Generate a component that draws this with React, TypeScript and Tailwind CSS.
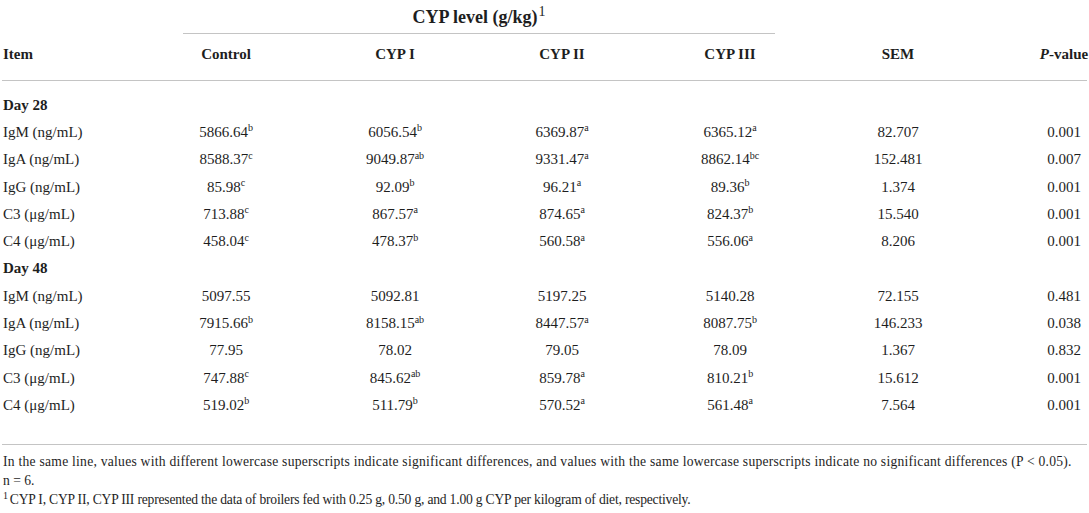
import React from "react";

type Cell = [string, string?];
type Row = { label: string; cells: Cell[]; sem: string; p: string };

const day28: Row[] = [
  { label: "IgM (ng/mL)", cells: [["5866.64", "b"], ["6056.54", "b"], ["6369.87", "a"], ["6365.12", "a"]], sem: "82.707", p: "0.001" },
  { label: "IgA (ng/mL)", cells: [["8588.37", "c"], ["9049.87", "ab"], ["9331.47", "a"], ["8862.14", "bc"]], sem: "152.481", p: "0.007" },
  { label: "IgG (ng/mL)", cells: [["85.98", "c"], ["92.09", "b"], ["96.21", "a"], ["89.36", "b"]], sem: "1.374", p: "0.001" },
  { label: "C3 (\u03bcg/mL)", cells: [["713.88", "c"], ["867.57", "a"], ["874.65", "a"], ["824.37", "b"]], sem: "15.540", p: "0.001" },
  { label: "C4 (\u03bcg/mL)", cells: [["458.04", "c"], ["478.37", "b"], ["560.58", "a"], ["556.06", "a"]], sem: "8.206", p: "0.001" },
];

const day48: Row[] = [
  { label: "IgM (ng/mL)", cells: [["5097.55"], ["5092.81"], ["5197.25"], ["5140.28"]], sem: "72.155", p: "0.481" },
  { label: "IgA (ng/mL)", cells: [["7915.66", "b"], ["8158.15", "ab"], ["8447.57", "a"], ["8087.75", "b"]], sem: "146.233", p: "0.038" },
  { label: "IgG (ng/mL)", cells: [["77.95"], ["78.02"], ["79.05"], ["78.09"]], sem: "1.367", p: "0.832" },
  { label: "C3 (\u03bcg/mL)", cells: [["747.88", "c"], ["845.62", "ab"], ["859.78", "a"], ["810.21", "b"]], sem: "15.612", p: "0.001" },
  { label: "C4 (\u03bcg/mL)", cells: [["519.02", "b"], ["511.79", "b"], ["570.52", "a"], ["561.48", "a"]], sem: "7.564", p: "0.001" },
];

const gridCols = "grid grid-cols-[142px_168px_170px_164px_172px_164px_109px]";

function DataRow({ r }: { r: Row }) {
  return (
    <div className={`${gridCols} h-[27.3px] items-center`}>
      <div className="pl-[3px] whitespace-nowrap">{r.label}</div>
      {r.cells.map((c, i) => (
        <div key={i} className="text-center whitespace-nowrap">
          {c[0]}
          {c[1] ? <sup className="text-[10px] top-[-0.55em]">{c[1]}</sup> : null}
        </div>
      ))}
      <div className="text-center">{r.sem}</div>
      <div className="text-center pl-[59px]">{r.p}</div>
    </div>
  );
}

function GroupRow({ label }: { label: string }) {
  return (
    <div className={`${gridCols} h-[27.3px] items-center`}>
      <div className="pl-[3px] font-bold whitespace-nowrap">{label}</div>
    </div>
  );
}

export default function App() {
  return (
    <div className="w-[1089px] h-[513px] bg-white text-[#1e1e1e] font-['Liberation_Serif',serif] text-[15px] leading-[20px] overflow-hidden">
      {/* top spanning header */}
      <div className={`${gridCols}`}>
        <div />
        <div className="col-span-4 mx-[41px] h-[34px] border-b border-[#c4c4c4] flex items-center justify-center">
          <span className="font-bold text-[18px] whitespace-nowrap">
            CYP level (g/kg)<sup className="font-normal text-[14px] top-[-0.45em] ml-[1px]">1</sup>
          </span>
        </div>
      </div>
      {/* column header */}
      <div className="mx-[2px] border-b border-[#c4c4c4] h-[47px] pt-[10px]">
        <div className={`${gridCols} -ml-[2px] font-bold`}>
          <div className="pl-[3px]">Item</div>
          <div className="text-center">Control</div>
          <div className="text-center">CYP I</div>
          <div className="text-center">CYP II</div>
          <div className="text-center">CYP III</div>
          <div className="text-center">SEM</div>
          <div className="text-center pl-[59px] whitespace-nowrap">
            <span className="italic">P</span>-value
          </div>
        </div>
      </div>
      {/* body */}
      <div className="mx-[2px] border-b border-[#c4c4c4] pt-[10px] pb-[25px]">
        <div className="-ml-[2px]">
          <GroupRow label="Day 28" />
          {day28.map((r, i) => (
            <DataRow key={i} r={r} />
          ))}
          <GroupRow label="Day 48" />
          {day48.map((r, i) => (
            <DataRow key={i} r={r} />
          ))}
        </div>
      </div>
      {/* footnotes */}
      <div className="pl-[3px] pt-[7px] text-[13.6px] leading-[19px] whitespace-nowrap">
        <div className="tracking-[0.25px]">
          In the same line, values with different lowercase superscripts indicate significant differences, and values with the same lowercase superscripts indicate no significant differences (P &lt; 0.05).
        </div>
        <div>n = 6.</div>
        <div className="tracking-[-0.2px]">
          <sup className="text-[10px] mr-[2px]">1</sup>CYP I, CYP II, CYP III represented the data of broilers fed with 0.25 g, 0.50 g, and 1.00 g CYP per kilogram of diet, respectively.
        </div>
      </div>
    </div>
  );
}
